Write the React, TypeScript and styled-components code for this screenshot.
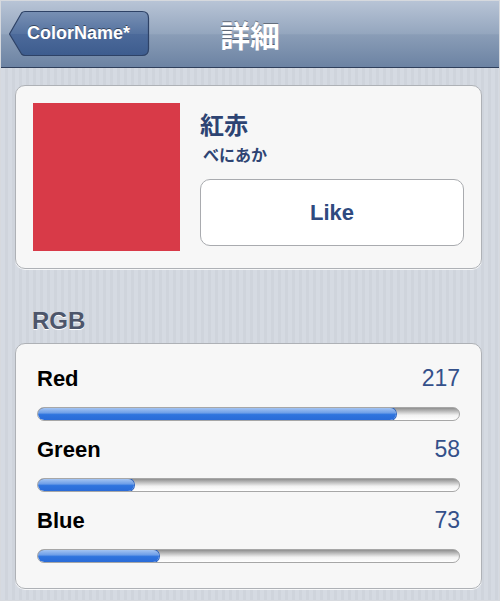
import React from 'react';
import styled, { createGlobalStyle } from 'styled-components';

const GlobalStyle = createGlobalStyle`
    html, body {
        margin: 0;
        padding: 0;
    }
    body {
        font-family: "Liberation Sans", "Noto Sans CJK JP", sans-serif;
    }
`;

const Screen = styled.div`
    width: 500px;
    height: 601px;
    box-sizing: border-box;
    overflow: hidden;
    display: flex;
    flex-direction: column;
    border: 1px solid #d6d9de;
    background: repeating-linear-gradient(
        to right,
        #d5dae2 0px,
        #d5dae2 4px,
        #cfd4dc 4px,
        #cfd4dc 7px
    );
`;

const NavBar = styled.header`
    height: 66px;
    flex-shrink: 0;
    display: flex;
    align-items: center;
    justify-content: center;
    position: relative;
    background: linear-gradient(to bottom, #b8c4d6 0%, #94a6be 50%, #8a9db7 51%, #6c83a3 100%);
    border-bottom: 1px solid #2f3f5b;
`;

const BackButton = styled.button`
    position: absolute;
    left: 7px;
    top: 9px;
    width: 142px;
    height: 47px;
    padding: 0 0 0 19px;
    border: none;
    background: none;
    display: flex;
    align-items: center;
    font-family: "Liberation Sans", sans-serif;
    font-size: 18px;
    font-weight: bold;
    color: #fff;
    text-shadow: 0 -1px 0 rgba(0, 0, 0, 0.45);
    cursor: pointer;

    svg {
        position: absolute;
        inset: 0;
    }

    span {
        position: relative;
    }
`;

const NavTitle = styled.h1`
    margin: 0;
    font-size: 30px;
    font-weight: bold;
    color: #fff;
    text-shadow: 0 -1px 0 rgba(0, 0, 0, 0.4);
    font-family: "Liberation Sans", "Noto Sans CJK JP", sans-serif;
`;

const Content = styled.main`
    display: flex;
    flex-direction: column;
    padding: 17px 17px 0 14px;
`;

const Card = styled.section`
    background: #f7f7f7;
    border: 1px solid #aeb1b6;
    border-radius: 10px;
    box-shadow: 0 1px 0 rgba(255, 255, 255, 0.8);
`;

const ColorCard = styled(Card)`
    display: flex;
    gap: 20px;
    padding: 17px;
`;

const Swatch = styled.div<{ $color: string }>`
    width: 147px;
    height: 148px;
    flex-shrink: 0;
    background: ${(p) => p.$color};
`;

const Info = styled.div`
    flex: 1;
    display: flex;
    flex-direction: column;
`;

const ColorName = styled.div`
    margin-top: 8px;
    font-size: 24px;
    line-height: 30px;
    font-weight: bold;
    color: #2e4473;
`;

const Reading = styled.div`
    margin-top: 5px;
    padding-left: 3px;
    font-size: 16px;
    line-height: 20px;
    font-weight: bold;
    color: #2e4473;
`;

const LikeButton = styled.button`
    margin-top: 13px;
    height: 67px;
    border: 1px solid #a9abaf;
    border-radius: 10px;
    background: #fff;
    font-family: "Liberation Sans", sans-serif;
    font-size: 22px;
    font-weight: bold;
    color: #2f4a7f;
    cursor: pointer;
`;

const SectionHeader = styled.h2`
    margin: 38px 0 8px 17px;
    font-size: 24px;
    line-height: 28px;
    font-weight: bold;
    color: #4d566b;
    text-shadow: 0 1px 0 #fff;
`;

const RgbCard = styled(Card)`
    display: flex;
    flex-direction: column;
    gap: 15px;
    padding: 21px 21px 25px 21px;
`;

const Channel = styled.div`
    display: flex;
    flex-direction: column;
    gap: 16px;
`;

const ChannelHead = styled.div`
    display: flex;
    justify-content: space-between;
    align-items: baseline;
    height: 26px;
    line-height: 26px;
`;

const ChannelName = styled.span`
    font-size: 22px;
    font-weight: bold;
    color: #000;
`;

const ChannelValue = styled.span`
    font-size: 23px;
    color: #34508a;
`;

const Track = styled.div`
    height: 14px;
    box-sizing: border-box;
    border-radius: 7px;
    border: 1px solid #a7a7a7;
    background: linear-gradient(to bottom, #8f8f8f 0%, #c9c9c9 35%, #f2f2f2 60%, #ffffff 100%);
    overflow: hidden;
    display: flex;
`;

const Fill = styled.div`
    height: 100%;
    border-radius: 7px;
    box-shadow: 0 0 0 1px #2a62c2;
    background: linear-gradient(to bottom, #a4c4f2 0%, #6f9fe8 40%, #2f74de 55%, #2a6bd8 100%);
`;

const channels = [
    { name: 'Red', value: 217 },
    { name: 'Green', value: 58 },
    { name: 'Blue', value: 73 },
];

const BackShape = () => (
    <svg width="142" height="47" viewBox="0 0 142 47">
        <defs>
            <linearGradient id="backFill" x1="0" y1="0" x2="0" y2="1">
                <stop offset="0" stopColor="#7890b4" />
                <stop offset="0.5" stopColor="#5673a0" />
                <stop offset="0.51" stopColor="#4c6a9a" />
                <stop offset="1" stopColor="#3d5c8e" />
            </linearGradient>
        </defs>
        <path
            d="M1.5 24 L13.5 3 Q15 1.5 17 1.5 L134 1.5 Q140.5 1.5 140.5 8 L140.5 39 Q140.5 45.5 134 45.5 L17 45.5 Q15 45.5 13.5 44 Z"
            fill="url(#backFill)"
            stroke="#2e4266"
            strokeWidth="1.2"
        />
    </svg>
);

export default function App() {
    return (
        <>
            <GlobalStyle />
            <Screen>
                <NavBar>
                    <BackButton>
                        <BackShape />
                        <span>ColorName*</span>
                    </BackButton>
                    <NavTitle>詳細</NavTitle>
                </NavBar>
                <Content>
                    <ColorCard>
                        <Swatch $color="#d83a48" />
                        <Info>
                            <ColorName>紅赤</ColorName>
                            <Reading>べにあか</Reading>
                            <LikeButton>Like</LikeButton>
                        </Info>
                    </ColorCard>
                    <SectionHeader>RGB</SectionHeader>
                    <RgbCard>
                        {channels.map((c) => (
                            <Channel key={c.name}>
                                <ChannelHead>
                                    <ChannelName>{c.name}</ChannelName>
                                    <ChannelValue>{c.value}</ChannelValue>
                                </ChannelHead>
                                <Track>
                                    <Fill style={{ width: `${(c.value / 255) * 100}%` }} />
                                </Track>
                            </Channel>
                        ))}
                    </RgbCard>
                </Content>
            </Screen>
        </>
    );
}
